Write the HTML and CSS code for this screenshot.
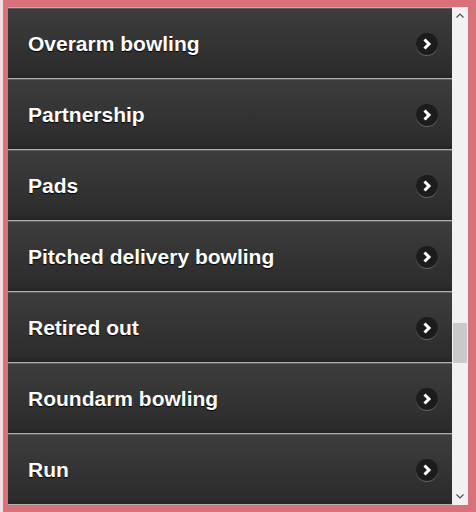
FILE: index.html
```html
<!DOCTYPE html>
<html lang="en">
<head>
    <meta charset="UTF-8">
    <title>Cricket terms</title>
    <link rel="stylesheet" href="styles.css">
</head>
<body>
<div class="frame">
    <!-- term list -->
    <ul class="terms">
        <li class="term">
            <span class="term-name">Overarm bowling</span>
            <svg class="arrow" viewBox="0 0 22 22"><circle cx="11" cy="11" r="11"/><path d="M8.5 6.5 L13 11 L8.5 15.5"/></svg>
        </li>
        <li class="term">
            <span class="term-name">Partnership</span>
            <svg class="arrow" viewBox="0 0 22 22"><circle cx="11" cy="11" r="11"/><path d="M8.5 6.5 L13 11 L8.5 15.5"/></svg>
        </li>
        <li class="term">
            <span class="term-name">Pads</span>
            <svg class="arrow" viewBox="0 0 22 22"><circle cx="11" cy="11" r="11"/><path d="M8.5 6.5 L13 11 L8.5 15.5"/></svg>
        </li>
        <li class="term">
            <span class="term-name">Pitched delivery bowling</span>
            <svg class="arrow" viewBox="0 0 22 22"><circle cx="11" cy="11" r="11"/><path d="M8.5 6.5 L13 11 L8.5 15.5"/></svg>
        </li>
        <li class="term">
            <span class="term-name">Retired out</span>
            <svg class="arrow" viewBox="0 0 22 22"><circle cx="11" cy="11" r="11"/><path d="M8.5 6.5 L13 11 L8.5 15.5"/></svg>
        </li>
        <li class="term">
            <span class="term-name">Roundarm bowling</span>
            <svg class="arrow" viewBox="0 0 22 22"><circle cx="11" cy="11" r="11"/><path d="M8.5 6.5 L13 11 L8.5 15.5"/></svg>
        </li>
        <li class="term">
            <span class="term-name">Run</span>
            <svg class="arrow" viewBox="0 0 22 22"><circle cx="11" cy="11" r="11"/><path d="M8.5 6.5 L13 11 L8.5 15.5"/></svg>
        </li>
    </ul>
    <!-- scrollbar -->
    <div class="scrollbar">
        <div class="scroll-btn">
            <svg viewBox="0 0 8 5"><path d="M0.5 4.5 L4 1 L7.5 4.5"/></svg>
        </div>
        <div class="scroll-track">
            <div class="scroll-thumb"></div>
        </div>
        <div class="scroll-btn">
            <svg viewBox="0 0 8 5"><path d="M0.5 0.5 L4 4 L7.5 0.5"/></svg>
        </div>
    </div>
</div>
</body>
</html>
```

FILE: styles.css
```css
*{
    margin: 0;
    padding: 0;
    list-style: none;
    box-sizing: border-box;
}
html,body{
    width: 100%;
    height: 100%;
    overflow: hidden;
}
body{
    background-color: #f3dfe1;
    font-family: "Liberation Sans", Arial, sans-serif;
}
.frame{
    display: flex;
    margin-left: 3px;
    height: 512px;
    border-style: solid;
    border-color: #d8717a;
    border-width: 7px 8px 7px 5px;
}
.terms{
    flex: 1;
    display: flex;
    flex-direction: column;
}
.term{
    display: flex;
    align-items: center;
    justify-content: space-between;
    height: 71px;
    padding: 2px 14px 0 20px;
    border-top: 1px solid #b0b0b0;
    background: linear-gradient(#3d3d3d, #2c2c2c 92%, #242424);
    box-shadow: inset 0 1px 0 #5e5e5e;
}
.term:last-child{
    height: 72px;
    border-bottom: 1px solid #b0b0b0;
}
.term-name{
    color: #fff;
    font-size: 21px;
    font-weight: bold;
    text-shadow: 0 1px 1px #000;
}
.arrow{
    width: 22px;
    height: 22px;
    filter: drop-shadow(0 1px 0 rgba(255,255,255,.25));
}
.arrow circle{
    fill: #1c1c1c;
}
.arrow path{
    fill: none;
    stroke: #fff;
    stroke-width: 3;
}
.scrollbar{
    width: 16px;
    display: flex;
    flex-direction: column;
    background-color: #f1f1f1;
}
.scroll-btn{
    height: 17px;
    display: flex;
    align-items: center;
    justify-content: center;
}
.scroll-btn svg{
    width: 8px;
    height: 5px;
}
.scroll-btn path{
    fill: none;
    stroke: #505050;
    stroke-width: 1.2;
}
.scroll-track{
    flex: 1;
    padding-top: 299px;
}
.scroll-thumb{
    margin: 0 1px;
    height: 40px;
    background-color: #c9c9c9;
}
```
